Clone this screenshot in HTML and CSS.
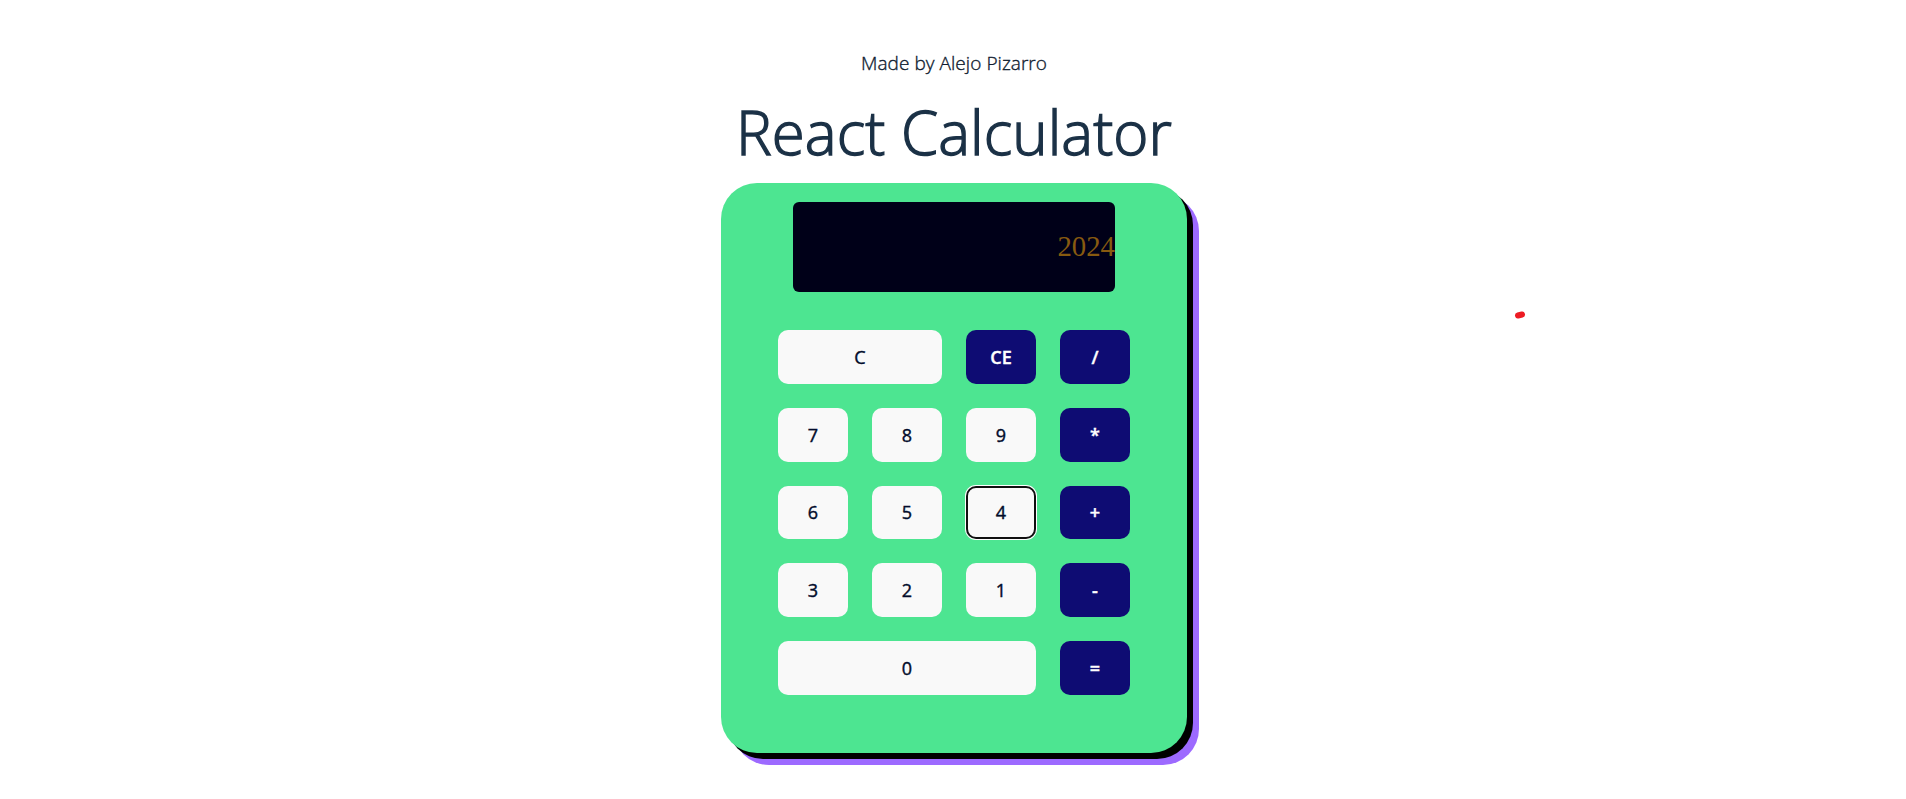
FILE: index.html
```html
<!DOCTYPE html>
<html lang="en">
<head>
<meta charset="utf-8">
<title>React Calculator</title>
<link rel="stylesheet" href="styles.css">
</head>
<body>
<main class="app">
  <p class="author">Made by Alejo Pizarro</p>
  <h1 class="title">React Calculator</h1>
  <section class="calculator">
    <div class="display">2024</div>
    <div class="keys">
      <button class="key span-2">C</button>
      <button class="key operator">CE</button>
      <button class="key operator">/</button>
      <button class="key">7</button>
      <button class="key">8</button>
      <button class="key">9</button>
      <button class="key operator">*</button>
      <button class="key">6</button>
      <button class="key">5</button>
      <button class="key active">4</button>
      <button class="key operator">+</button>
      <button class="key">3</button>
      <button class="key">2</button>
      <button class="key">1</button>
      <button class="key operator">-</button>
      <button class="key span-3">0</button>
      <button class="key operator">=</button>
    </div>
  </section>
</main>
<svg class="mark" viewBox="0 0 12 8" aria-hidden="true"><path d="M4 4.5 L8 3.5"/></svg>
</body>
</html>
```
FILE: styles.css
```css
* {
  box-sizing: border-box;
}

body {
  margin: 0;
  height: 799px;
  overflow: hidden;
  background: #fff;
  color: #213547;
  font-family: "Open Sans", sans-serif;
}

.app {
  display: flex;
  flex-direction: column;
  align-items: center;
  padding: 48px 0 0 2px;
}

.author {
  margin: 0;
  height: 30px;
  color: #101c30;
  font-size: 19px;
  font-weight: 300;
  line-height: 30px;
  letter-spacing: 0.06px;
  -webkit-text-stroke: 0.35px #101c30;
}

.title {
  margin: 20px 0 0;
  height: 85px;
  color: #1b3146;
  font-size: 60px;
  font-weight: 300;
  line-height: 69px;
  letter-spacing: 0.05px;
  white-space: nowrap;
  -webkit-text-stroke: 1.4px #1b3146;
}

.calculator {
  display: flex;
  flex-direction: column;
  align-items: center;
  width: 466px;
  height: 570px;
  padding-top: 19px;
  border-radius: 36px;
  background: #4de591;
  box-shadow: 6px 6px 0 #000, 12px 12px 0 #9d6aff;
}

.display {
  width: 322px;
  height: 90px;
  border-radius: 6px;
  background: #000018;
  color: #875a10;
  font-family: "Liberation Serif", serif;
  font-size: 28.8px;
  line-height: 88px;
  text-align: right;
}

.keys {
  display: grid;
  grid-template-columns: repeat(4, 70px);
  grid-auto-rows: 53.8px;
  gap: 24px;
  margin-top: 38px;
}

.key {
  border: 0;
  border-radius: 10px;
  padding: 0;
  background: #f9f9f9;
  color: #020c2b;
  font-family: "Open Sans", sans-serif;
  font-size: 18px;
  font-weight: 500;
  line-height: 26px;
  -webkit-text-stroke: 0.4px currentColor;
}

.operator {
  background: #0e0c73;
  color: #fff;
  font-weight: 600;
}

.span-2 {
  grid-column: span 2;
}

.span-3 {
  grid-column: span 3;
}

.active {
  box-shadow: 0 0 0 1px #fff, inset 0 0 0 2px #101010;
}

.mark {
  position: absolute;
  left: 1514px;
  top: 311px;
  width: 12px;
  height: 8px;
}

.mark path {
  fill: none;
  stroke: #ed1c24;
  stroke-width: 6;
  stroke-linecap: round;
}
```
